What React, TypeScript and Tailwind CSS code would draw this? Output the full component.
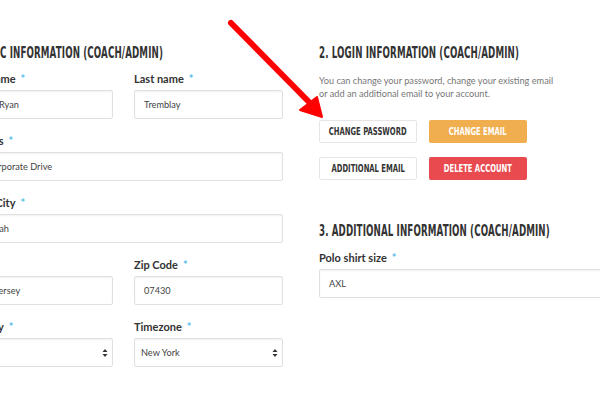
const condFont = "font-['DejaVu_Sans',sans-serif] font-bold uppercase whitespace-nowrap";
const labelCls = "font-['Lato',sans-serif] font-bold text-[11px] leading-none text-[#333]";
const inputCls = "h-[29px] w-full border border-[#e0e0e0] rounded-[2px] shadow-[inset_0_1px_2px_rgba(0,0,0,0.06)] flex items-center px-[9px] font-['Lato',sans-serif] text-[9.2px] text-[#444]";

function Heading({ children, className = "" }: { children: string; className?: string }) {
  return (
    <h2 className={"h-[16px] leading-none text-[#333] " + className}>
      <span className={condFont + " inline-block origin-left scale-x-[0.58] text-[15px] tracking-[0.2px]"}>{children}</span>
    </h2>
  );
}

function Field({ label, value, select, optional }: { label: string; value: string; select?: boolean; optional?: boolean }) {
  return (
    <div className="flex flex-col gap-[6px]">
      <div className={labelCls + " h-[11px]"}>
        {label}
        {!optional && <span className="ml-[5px] text-[#5bc0eb]">*</span>}
      </div>
      <div className={inputCls + (select ? " justify-between pl-[6px] pr-[4px]" : "")}>
        <span>{value}</span>
        {select && (
          <svg width="6" height="10" viewBox="0 0 6 10">
            <path d="M0.5 4 L3 1 L5.5 4 Z" fill="#333" />
            <path d="M0.5 6 L3 9 L5.5 6 Z" fill="#333" />
          </svg>
        )}
      </div>
    </div>
  );
}

function Btn({ children, tone }: { children: string; tone: "white" | "orange" | "red" }) {
  const toneCls =
    tone === "white"
      ? "bg-white border border-[#e6e6e6] text-[#333]"
      : tone === "orange"
      ? "bg-[#f0ae4f] text-white"
      : "bg-[#e84a4f] text-white";
  return (
    <div className={"w-[98px] h-[23px] rounded-[2px] flex items-center justify-center " + toneCls}>
      <span className={condFont + " inline-block scale-x-[0.62] text-[11px] leading-none"}>{children}</span>
    </div>
  );
}

export default function App() {
  return (
    <div className="relative w-[600px] h-[400px] overflow-hidden bg-white">
      <div className="flex gap-[36px] ml-[-36px] pt-[44px]">
        {/* left column */}
        <div className="w-[319px] shrink-0 flex flex-col">
          <Heading>1. Basic Information (Coach/Admin)</Heading>
          <div className="mt-[13px] flex flex-col gap-[16px]">
            <div className="grid grid-cols-2 gap-[21px]">
              <Field label="First name" value="Kevin Ryan" />
              <Field label="Last name" value="Tremblay" />
            </div>
            <Field label="Address" value="24 Corporate Drive" />
            <Field label="Town/City" value="Mahwah" />
            <div className="grid grid-cols-2 gap-[21px]">
              <Field label="State" value="New Jersey" optional />
              <Field label="Zip Code" value="07430" />
            </div>
            <div className="grid grid-cols-2 gap-[21px]">
              <Field label="Country" value="USA" select />
              <Field label="Timezone" value="New York" select />
            </div>
          </div>
        </div>

        {/* right column */}
        <div className="w-[330px] shrink-0 flex flex-col">
          <Heading>2. Login Information (Coach/Admin)</Heading>
          <p className="mt-[14px] font-['Lato',sans-serif] text-[9.2px] leading-[13px] text-[#777]">
            You can change your password, change your existing email
            <br />
            or add an additional email to your account.
          </p>
          <div className="mt-[20px] grid grid-cols-[98px_98px] gap-x-[12px] gap-y-[14px]">
            <Btn tone="white">Change Password</Btn>
            <Btn tone="orange">Change Email</Btn>
            <Btn tone="white">Additional Email</Btn>
            <Btn tone="red">Delete Account</Btn>
          </div>
          <Heading className="mt-[42px]">3. Additional Information (Coach/Admin)</Heading>
          <div className="mt-[14px] flex flex-col gap-[6px]">
            <div className={labelCls}>
              Polo shirt size
              <span className="ml-[5px] text-[#5bc0eb]">*</span>
            </div>
            <div className={inputCls + " w-[330px] px-[6px]"}>AXL</div>
          </div>
        </div>
      </div>

      {/* red annotation arrow */}
      <svg className="absolute inset-0 pointer-events-none" width="600" height="400">
        <line x1="231" y1="23" x2="310" y2="103" stroke="#f00" strokeWidth="6" strokeLinecap="round" />
        <path d="M300 110 L322 117 L317 97 Z" fill="#f00" stroke="#f00" strokeWidth="2" strokeLinejoin="round" />
      </svg>
    </div>
  );
}
